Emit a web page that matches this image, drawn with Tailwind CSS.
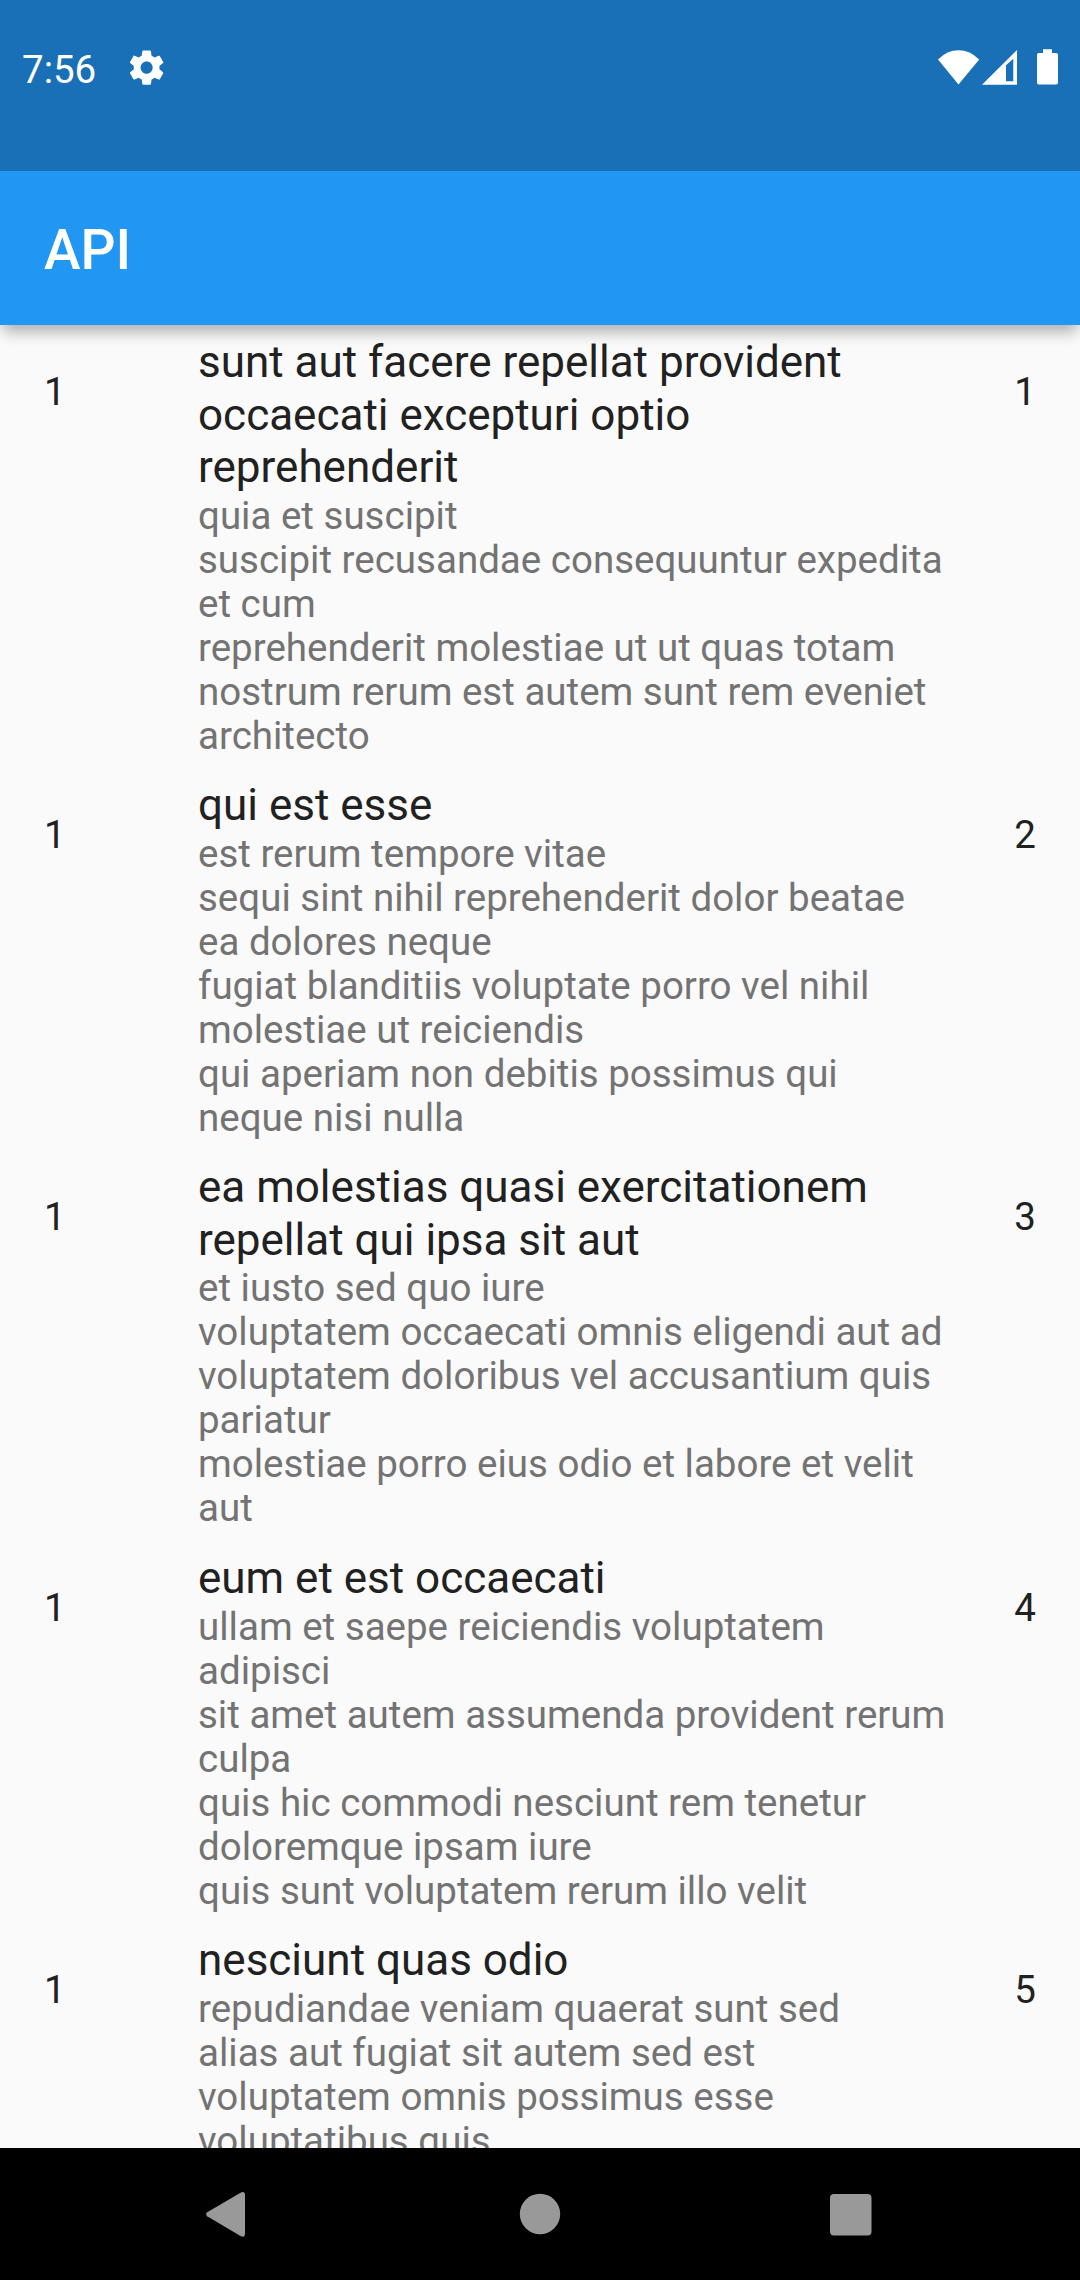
<!DOCTYPE html>
<html lang="en">
<head>
<meta charset="utf-8">
<title>API</title>
<script src="https://cdn.jsdelivr.net/npm/@tailwindcss/browser@4"></script>
</head>
<body class="bg-[#fafafa]">
<div class="flex h-[2280px] w-[1080px] flex-col overflow-hidden bg-[#fafafa] font-['Roboto',sans-serif] text-[#212121]">
  <header class="relative z-10 shrink-0 bg-[#2196f3] text-white shadow-[0_11px_14px_-4px_rgba(0,0,0,0.23),0_5px_16px_0_rgba(0,0,0,0.10)]">
    <div class="flex h-[171px] items-start bg-[#1970b6] pt-[46px] pr-[22px] pl-[22px]">
      <span class="w-[104px] pt-px text-[38.5px] leading-[45px]">7:56</span>
      <svg class="mt-[0.7px] h-[41.25px] w-[41.25px]" viewBox="0 0 24 24" fill="currentColor"><path d="M19.43 12.98c.04-.32.07-.64.07-.98s-.03-.66-.07-.98l2.11-1.65c.19-.15.24-.42.12-.64l-2-3.46c-.12-.22-.39-.3-.61-.22l-2.49 1c-.52-.4-1.08-.73-1.69-.98l-.38-2.65C14.46 2.18 14.25 2 14 2h-4c-.25 0-.46.18-.49.42l-.38 2.65c-.61.25-1.17.59-1.69.98l-2.49-1c-.23-.09-.49 0-.61.22l-2 3.46c-.13.22-.07.49.12.64l2.11 1.65c-.04.32-.07.65-.07.98s.03.66.07.98l-2.11 1.65c-.19.15-.24.42-.12.64l2 3.46c.12.22.39.3.61.22l2.49-1c.52.4 1.08.73 1.69.98l.38 2.65c.03.24.24.42.49.42h4c.25 0 .46-.18.49-.42l.38-2.65c.61-.25 1.17-.59 1.69-.98l2.49 1c.23.09.49 0 .61-.22l2-3.46c.12-.22.07-.49-.12-.64l-2.11-1.65zM12 15.500c-1.930 0-3.500-1.570-3.500-3.500s1.570-3.500 3.500-3.500 3.500 1.570 3.500 3.500-1.570 3.500-3.500 3.500z"/></svg>
      <svg class="ml-auto h-[40px] w-[122px]" viewBox="936 46 122 40" fill="currentColor">
        <path d="M938 59.500Q947 50.300 958.500 50.300T979.200 59.500L958.500 84.500z"/>
        <path fill-rule="evenodd" d="M1017 50v34.700H982zM1006 65.300v16h7.300V58.700z"/>
        <path d="M1043 49.200h9V53h4.200q1.800 0 1.800 1.800v27.900q0 1.800-1.800 1.800h-17.400q-1.800 0-1.800-1.800V54.800q0-1.800 1.800-1.800h4.200z"/>
      </svg>
    </div>
    <h1 class="flex h-[154px] items-center px-[44px] pt-[4px] text-[55px] font-medium">API</h1>
  </header>

  <main id="posts" class="min-h-0 flex-1 overflow-hidden pt-[0.35px]"></main>

  <nav class="h-[132px] shrink-0 bg-black">
    <svg class="h-[132px] w-[1080px]" viewBox="0 0 1080 132" fill="#999999">
      <path d="M207.200 64.300L240.500 44.700Q245 42.600 245 47V86q0 4.200-4.500 1.900L207.200 68.300q-2-2 0-4z"/>
      <circle cx="540" cy="66" r="20.200"/>
      <rect x="830" y="46" width="41.500" height="41.500" rx="4"/>
    </svg>
  </nav>
</div>
<script>
const posts = [
  [["sunt aut facere repellat provident", "occaecati excepturi optio", "reprehenderit"],
   ["quia et suscipit", "suscipit recusandae consequuntur expedita", "et cum", "reprehenderit molestiae ut ut quas totam", "nostrum rerum est autem sunt rem eveniet", "architecto"]],
  [["qui est esse"],
   ["est rerum tempore vitae", "sequi sint nihil reprehenderit dolor beatae", "ea dolores neque", "fugiat blanditiis voluptate porro vel nihil", "molestiae ut reiciendis", "qui aperiam non debitis possimus qui", "neque nisi nulla"]],
  [["ea molestias quasi exercitationem", "repellat qui ipsa sit aut"],
   ["et iusto sed quo iure", "voluptatem occaecati omnis eligendi aut ad", "voluptatem doloribus vel accusantium quis", "pariatur", "molestiae porro eius odio et labore et velit", "aut"]],
  [["eum et est occaecati"],
   ["ullam et saepe reiciendis voluptatem", "adipisci", "sit amet autem assumenda provident rerum", "culpa", "quis hic commodi nesciunt rem tenetur", "doloremque ipsam iure", "quis sunt voluptatem rerum illo velit"]],
  [["nesciunt quas odio"],
   ["repudiandae veniam quaerat sunt sed", "alias aut fugiat sit autem sed est", "voluptatem omnis possimus esse", "voluptatibus quis"]]
];
document.getElementById("posts").innerHTML = posts.map(([title, body], i) => `
  <article class="flex px-[44px] py-[11px]">
    <div class="w-[154px] shrink-0 pt-[33px] text-[38.5px] leading-[45px]">1</div>
    <div class="flex-1 whitespace-nowrap">
      <h2 class="text-[44px] leading-[52.25px]">${title.join("<br>")}</h2>
      <p class="mt-[0.43px] mb-[-0.43px] text-[38.5px] leading-[44px] text-[#737373]">${body.join("<br>")}</p>
    </div>
    <div class="pt-[33px] text-[38.5px] leading-[45px]">${i + 1}</div>
  </article>`).join("");
</script>
</body>
</html>
